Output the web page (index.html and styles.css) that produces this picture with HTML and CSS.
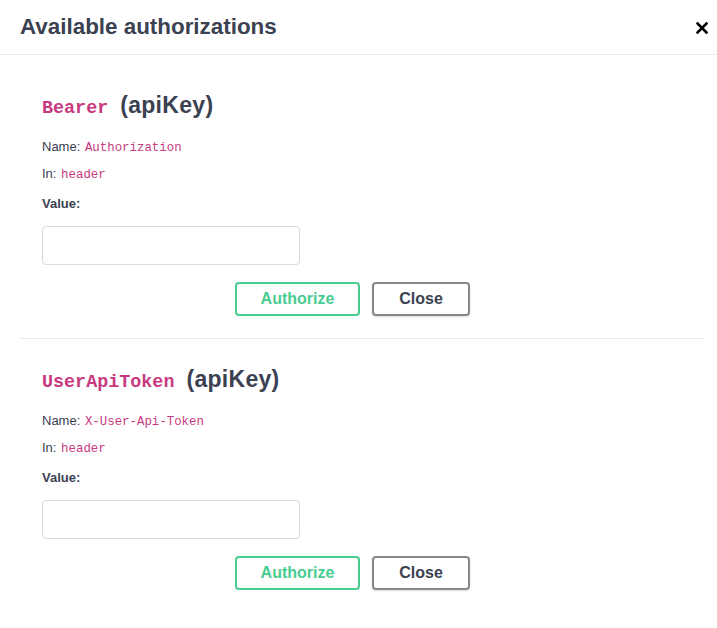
FILE: index.html
```html
<!DOCTYPE html>
<html>
<head>
<meta charset="utf-8">
<link rel="stylesheet" href="styles.css">
</head>
<body>
<div class="modal">
  <div class="modal-header">
    <h3 class="modal-title">Available authorizations</h3>
    <button class="close-modal" aria-label="Close">
      <svg width="12" height="12" viewBox="0 0 12 12"><path d="M1.5 1.5 L10.5 10.5 M10.5 1.5 L1.5 10.5" stroke="#000" stroke-width="2.6" stroke-linecap="square" fill="none"/></svg>
    </button>
  </div>
  <div class="modal-content">
    <div class="auth-container">
      <h4><code>Bearer</code><span class="type">(apiKey)</span></h4>
      <div class="row">Name: <code>Authorization</code></div>
      <div class="row">In: <code>header</code></div>
      <div class="row value">Value:</div>
      <input class="value-input" type="text">
      <div class="btn-wrapper">
        <button class="btn authorize">Authorize</button>
        <button class="btn close">Close</button>
      </div>
    </div>
    <div class="auth-container last">
      <h4><code>UserApiToken</code><span class="type">(apiKey)</span></h4>
      <div class="row">Name: <code>X-User-Api-Token</code></div>
      <div class="row">In: <code>header</code></div>
      <div class="row value">Value:</div>
      <input class="value-input" type="text">
      <div class="btn-wrapper">
        <button class="btn authorize">Authorize</button>
        <button class="btn close">Close</button>
      </div>
    </div>
  </div>
</div>
</body>
</html>
```
FILE: styles.css
```css
html, body {
  margin: 0;
  padding: 0;
  background: #fff;
}
body {
  font-family: "Liberation Sans", Arial, sans-serif;
  color: #3b4151;
}
.modal {
  width: 717px;
}
.modal-header {
  display: flex;
  align-items: center;
  justify-content: space-between;
  height: 54px;
  padding: 0 9px 0 20px;
  border-bottom: 1px solid #ebebeb;
  box-sizing: content-box;
}
.modal-title {
  margin: 0;
  font-size: 22.4px;
  font-weight: 700;
  color: #3b4151;
}
.close-modal {
  border: 0;
  background: none;
  padding: 0;
  width: 12px;
  height: 12px;
  display: flex;
  align-items: center;
  justify-content: center;
  margin-top: 1px;
}
.modal-content {
  padding: 20px 13px 20px 20px;
}
.auth-container {
  padding: 10px 20px 10px 22px;
  margin: 0 0 10px;
  border-bottom: 1px solid #ebebeb;
}
.auth-container.last {
  border-bottom: 0;
}
h4 {
  display: flex;
  align-items: baseline;
  height: 24px;
  margin: 8px 0 16px;
  font-size: 18px;
  line-height: 24px;
  font-weight: 700;
  color: #3b4151;
}
code {
  font-family: "Liberation Mono", "DejaVu Sans Mono", monospace;
  color: #c83a80;
  line-height: 1;
}
h4 code {
  font-size: 18.4px;
}
.type {
  font-size: 23px;
  margin-left: 12px;
  letter-spacing: 0.3px;
}
.row {
  height: 27px;
  font-size: 13px;
  line-height: 27px;
  color: #3b4151;
}
.row code {
  font-size: 12.4px;
  margin-left: 1px;
}
.row.value {
  font-weight: 700;
  margin-top: 3px;
}
.value-input {
  display: block;
  box-sizing: border-box;
  width: 258px;
  height: 39px;
  margin: 9px 0 0 0;
  border: 1px solid #d9d9d9;
  border-radius: 4px;
  background: #fff;
  padding: 8px 10px;
  font-size: 13px;
}
.btn-wrapper {
  display: flex;
  justify-content: center;
  gap: 12px;
  margin-top: 17px;
  padding-right: 21px;
  padding-bottom: 12px;
}
.btn {
  box-sizing: border-box;
  height: 34px;
  border-radius: 4px;
  background: #fff;
  font-family: "Liberation Sans", Arial, sans-serif;
  font-size: 16px;
  font-weight: 700;
  padding: 0;
}
.btn.authorize {
  width: 125px;
  border: 2px solid #49cc90;
  color: #49cc90;
}
.btn.close {
  width: 98px;
  border: 2px solid #888;
  color: #3b4151;
  box-shadow: 0 1px 2px rgba(0,0,0,0.15);
}
```
